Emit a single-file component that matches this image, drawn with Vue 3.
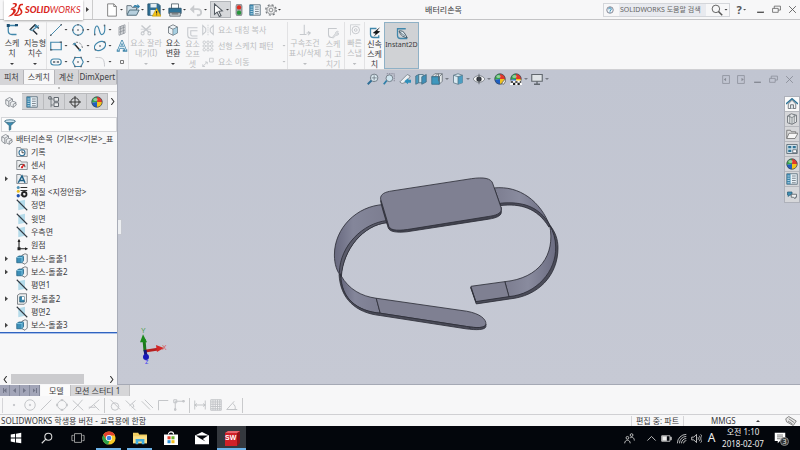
<script setup>
import { h } from 'vue'

const B = '#4187ab'
const D = '#5b636c'
const G = '#c6c9cd'
const ball = '<path d="M8 8V1A7 7 0 0 0 1 9z" fill="#35a84a"/><path d="M8 8V1a7 7 0 0 1 7 7z" fill="#e03a2c"/><path d="M8 8h7a7 7 0 0 1-7 7z" fill="#f2c21d"/><path d="M8 8v7a7 7 0 0 1-7-6z" fill="#1f5fc0"/><circle cx="8" cy="8" r="7" fill="none" stroke="#3c4a55"/><ellipse cx="6" cy="4.500" rx="3" ry="2" fill="#fff" opacity=".45"/>'
const part = '<path d="M1 5l5-3 4 2v3l4 1 1 4-4 3-4-2-2 1-4-3z" fill="#eef0f2" stroke="#777c83"/><path d="M1 5l4 2v7M5 7l5-3M7 12V9l3-2M11 15v-4l4-2" fill="none" stroke="#777c83"/>'
const folder = '<path d="M1 14V2h5l1 2h8v10z" fill="#eceef0" stroke="#70757c"/>'
const boss = '<path d="M8 3l4-2 3 1v10l-3 3-4-2z" fill="#f2f3f4" stroke="#555b62"/><path d="M1 6l3-2h6v6l-2 3H1z" fill="#3d8fb8" stroke="#1f5f80"/><path d="M1 6h7l2-2M8 6v7" fill="none" stroke="#8fd0ea"/>'
const plane = '<path d="M3 3l9-2v12l-9 2z" fill="#b5dbea"/><path d="M1 1l14 14" stroke="#333a42" stroke-width="1.500"/>'
const panel = '<path d="M1 1h14v14H1z" fill="#e9f1f6" stroke="#4a5f6e"/><path d="M1 1h5v14H1z" fill="#3d86ac"/><path d="M2 4h3M2 7h3M2 10h3M2 13h3" stroke="#d3e9f4"/><path d="M8 4h5M8 7h5M8 10h5M8 13h5" stroke="#5b6670"/>'

const icons = {
  ds: '<path d="M5 1.500C8 .5 10 1 9.500 3.500 9 5.500 6.500 6.500 4 7c4-.5 5.500 1.500 3.500 4.500C6 14 3 15.500 0 15.500c3-2 5-3.500 5.500-5.500.5-1.500-1-2-3-1.800l1.500-2.200c2-.5 3.300-1.300 3.500-2.300C7.700 2.500 6.800 2 5 2.500z" fill="#d9261c"/><path d="M17 3c-3-1-5 0-5 2.500 0 2 3 3 2.500 5.500-.5 2.500-4 3.500-7.500 3" fill="none" stroke="#d9261c" stroke-width="1.700"/><path d="M11 6c1 3-1 6-4 8" fill="none" stroke="#d9261c" stroke-width="1.300"/>',
  newdoc: '<path d="M3 1h7l3 3v11H3z" fill="#fff" stroke="#777"/><path d="M10 1v3h3" fill="none" stroke="#777"/>',
  open: '<path d="M1 13V3h5l1 2h5v3" fill="#cfdfe8" stroke="#5b6a75"/><path d="M1 14l3-6h11l-3 6z" fill="#b7d0de" stroke="#44606f"/><path d="M8 5c1-3 3-3 5-2V1l3 3-3 3V5c-2-1-3-1-5 0" fill="#2f7fa8"/>',
  save: '<path d="M1 1h12l2 2v11H1z" fill="#2f6f96" stroke="#24516c"/><path d="M4 1h7v4H4zM4 8h8v6H4z" fill="#e6eef3"/><path d="M11 6l5 9H6z" fill="#f6c518" stroke="#b38b00" stroke-width=".6"/><path d="M11 9v3M11 13v1" stroke="#222" stroke-width="1.200"/>',
  print: '<path d="M4 1h8v6H4z" fill="#fff" stroke="#56656f"/><path d="M1 6h14v6H1z" fill="#2f7398" stroke="#27516a"/><path d="M2 11h12v4H2z" fill="#d6dde1" stroke="#56656f"/><path d="M4 12.500h8" stroke="#333"/>',
  undo: '<path d="M2 7h8c5 0 5 7 1 7H9" fill="none" stroke="#c9cbce" stroke-width="2.200"/><path d="M6 2L1 7l5 5z" fill="#c9cbce"/>',
  cursor: '<path d="M4 1l9 8-4 .5 2.500 5-2 1L7 10.500 4 13z" fill="#fff" stroke="#555c63" stroke-width="1.200"/>',
  light: '<rect x="4" y="0" width="8" height="16" rx="3" fill="#a3a7aa" stroke="#787d81"/><circle cx="8" cy="4.500" r="2.900" fill="#e32a1d"/><circle cx="8" cy="11.500" r="2.900" fill="#27963c"/>',
  options: panel,
  gear: '<circle cx="8" cy="8" r="5.500" fill="#f0f0f0" stroke="#707478"/><circle cx="8" cy="8" r="2.500" fill="none" stroke="#707478"/><circle cx="8" cy="8" r="7" fill="none" stroke="#707478" stroke-width="1.600" stroke-dasharray="2.750 2.750"/>',
  help: '<circle cx="8" cy="8" r="6.500" fill="#eef5f9" stroke="#667" stroke-width="1.500"/><path d="M5.500 6.500c0-4 5-3.500 5 0 0 2-2.500 1.500-2.500 3.500M8 11v2" fill="none" stroke="#1f7fae" stroke-width="2"/>',
  search: '<circle cx="6.500" cy="6.500" r="5" fill="none" stroke="#555" stroke-width="1.200"/><path d="M10 10l5 5" stroke="#555" stroke-width="2"/>',
  min: '<path d="M2 13h12" stroke="currentColor" stroke-width="2.500"/>',
  restore: '<path d="M1 6h10v7H1zM4 6V2h11v7h-4" fill="none" stroke="currentColor" stroke-width="1.300"/>',
  close: '<path d="M2 2l12 12M14 2L2 14" stroke="currentColor" stroke-width="1.500"/>',
  dockl: '<path d="M3 1h12v14H3z" fill="none" stroke="currentColor" stroke-width="1.300"/><path d="M9 5v6L5 8z" fill="currentColor"/>',
  dockr: '<path d="M1 1h12v14H1z" fill="none" stroke="currentColor" stroke-width="1.300"/><path d="M8 5v6l4-3z" fill="currentColor"/>',
  sketch: `<path d="M14 2H3v7c0 4 2 5 5 5h6" fill="none" stroke="${B}" stroke-width="1.700"/><path d="M1 0h4v4H1zM12 0h4v3h-4z" fill="#1d4f72"/>`,
  dim: `<path d="M1 8l7-7 5 5M5 8l6 6" fill="none" stroke="#222d36" stroke-width="1.800"/><path d="M1 8l3-1 1 3zM9 0l3 5-5-1z" fill="${B}"/><path d="M5 8l8-6" stroke="${B}" stroke-width="1.500"/>`,
  line: `<path d="M1 15L15 1" stroke="${B}" stroke-width="1.300"/><path d="M0 14h2v2H0zM14 0h2v2h-2z" fill="${D}"/>`,
  circle: `<circle cx="8" cy="8" r="7" fill="none" stroke="${B}" stroke-width="1.500"/><path d="M7 7h2v2H7zM7 0h2v2H7zM7 14h2v2H7zM0 7h2v2H0zM14 7h2v2h-2z" fill="${D}"/>`,
  spline: `<path d="M1 15C0 3 4 0 6 5s2 10 5 9 4-6 3-13" fill="none" stroke="${B}" stroke-width="1.500"/><path d="M0 13h2v2H0zM13 1h2v2h-2z" fill="${D}"/>`,
  shade: '<path d="M4 4l8-3v11l-8 3zM6 3v11M8 2v11M10 2v11M4 7l8-3M4 11l8-3" fill="none" stroke="#8a8f95"/>',
  rect: `<path d="M1 3h14v10H1z" fill="none" stroke="${B}" stroke-width="1.600"/><path d="M0 12h3v2H0zM13 2h3v2h-3z" fill="${D}"/>`,
  arc: `<path d="M1 6c3-5 12-4 13 5" fill="none" stroke="#6b7278" stroke-width="1.200" stroke-dasharray="3 2"/><path d="M3 5l7 8" stroke="#222" stroke-width="1.800"/><path d="M2 4h3v3H2zM9 12h3v3H9z" fill="${B}"/>`,
  ellipse: `<ellipse cx="8" cy="8" rx="8" ry="5.500" transform="rotate(-30 8 8)" fill="none" stroke="${B}" stroke-width="1.600"/><path d="M7 7h2v2H7zM1 12h2v2H1zM13 2h2v2h-2z" fill="${D}"/>`,
  letterA: `<path d="M1 14h4M9 14h6M3 14L8 2l5 12M5 10h6" fill="none" stroke="${B}" stroke-width="3"/><path d="M3 14L8 2l5 12M5 10h6" fill="none" stroke="#e9f3f8" stroke-width="1.200"/>`,
  slot: `<rect x="1" y="4" width="14" height="8" rx="4" fill="none" stroke="${B}" stroke-width="1.500"/><path d="M4 7h3v2H4zM9 7h3v2H9z" fill="${D}"/>`,
  polygon: `<path d="M4 2h8l3 6-3 6H4L1 8z" fill="none" stroke="${B}" stroke-width="1.500"/><path d="M7 7h2v2H7zM3 1h2v2H3zM11 1h2v2h-2zM3 13h2v2H3zM11 13h2v2h-2z" fill="${D}"/>`,
  fillet: `<path d="M2 2h4c6 0 8 3 8 12" fill="none" stroke="${G}" stroke-width="1.300"/>`,
  point: '<path d="M6 6h4v4H6z" fill="none" stroke="#777" stroke-width="1.300"/>',
  trim: `<path d="M2 2l10 9M14 2L4 11" stroke="${G}" stroke-width="2"/><circle cx="3.500" cy="12.500" r="2" fill="none" stroke="${G}" stroke-width="1.400"/><circle cx="12.500" cy="12.500" r="2" fill="none" stroke="${G}" stroke-width="1.400"/><path d="M1 7h14" stroke="${G}"/>`,
  convert: '<path d="M2 4l6-3 6 3v8l-6 3-6-3z" fill="#eef3f6" stroke="#5e666e"/><path d="M2 4l6 3 6-3M8 7v8" fill="none" stroke="#5e666e"/><path d="M8 7l6-3v8l-6 3z" fill="#7ab8d4" opacity=".6"/>',
  offset: `<path d="M14 1H1v10c0 3 1 4 4 4h9M14 5H5v5c0 1 1 2 2 2h7" fill="none" stroke="${G}" stroke-width="1.400"/>`,
  mirror: `<path d="M8 1v14" stroke="${G}" stroke-dasharray="2 1"/><path d="M1 2v12l4-4V6zM15 2v12l-4-4V6z" fill="none" stroke="${G}" stroke-width="1.400"/>`,
  pattern: `<g fill="none" stroke="${G}" stroke-width="1.200"><circle cx="3" cy="3" r="1.700"/><circle cx="8" cy="3" r="1.700"/><circle cx="13" cy="3" r="1.700"/><circle cx="3" cy="8" r="1.700"/><circle cx="8" cy="8" r="1.700"/><circle cx="13" cy="8" r="1.700"/><circle cx="3" cy="13" r="1.700"/><circle cx="8" cy="13" r="1.700"/><circle cx="13" cy="13" r="1.700"/></g>`,
  move: `<path d="M10 3h5v5h-5z" fill="none" stroke="${G}" stroke-width="1.200"/><path d="M1 14l6-6M4 8h3v3M1 11v3h3" fill="none" stroke="${G}" stroke-width="1.200"/>`,
  relation: `<path d="M7 1v13M1 14h9" stroke="${G}" stroke-width="1.400"/><path d="M10 12h5M12 10l3 2-3 3" fill="none" stroke="${G}" stroke-width="1.400"/>`,
  repair: `<path d="M13 2H2v8c0 3 1 4 4 4h2" fill="none" stroke="${G}" stroke-width="1.400"/><path d="M7 14l4-5c0-3 3-4 4-3l-2 2 1 1 2-1c0 3-2 3-4 3l-4 4z" fill="#e3e4e6" stroke="${G}"/>`,
  snap: `<path d="M2 1v14M2 1h13" fill="none" stroke="${G}"/><circle cx="9" cy="8" r="5" fill="none" stroke="${G}" stroke-width="1.300"/><circle cx="9" cy="8" r="1.800" fill="none" stroke="${G}" stroke-width="1.300"/>`,
  rapid: `<path d="M10 2H2v8c0 3 1 4 4 4h7v-3" fill="none" stroke="${B}" stroke-width="1.700"/><path d="M15 0L5 8l4 1-3 4 9-7-4-1z" fill="#15181b"/>`,
  instant: `<path d="M13 1H2v9c0 3 1 4 4 4h9" fill="none" stroke="${B}" stroke-width="1.700"/><path d="M4 4c3-1 7 1 8 4l3 5-4-1c-3-1-5-3-7-8z" fill="#e4eef4" stroke="#3b505d" stroke-width="1.200"/><path d="M5 5l7 6" stroke="#3b505d"/>`,
  zoomfit: '<circle cx="9.500" cy="6.500" r="5" fill="#dcebf2" stroke="#6a747e" stroke-width="1.200"/><path d="M6 10l-5 5" stroke="#2f6f96" stroke-width="2.500"/><path d="M9.500 3v7M6 6.500h7" stroke="#6a747e"/>',
  zoomarea: '<path d="M5 1h10v10" fill="none" stroke="#778" stroke-dasharray="2 1"/><circle cx="8.500" cy="7" r="4.500" fill="#cfe4ee" stroke="#6e7882" stroke-width="1.200"/><path d="M5 10l-4 5" stroke="#2f7fa8" stroke-width="2.400"/>',
  prev: '<path d="M1 12L11 2l4 2-5 8-6 2z" fill="#eceff1" stroke="#6e7882"/><path d="M7 11l5-4v2h4v4h-4v2z" fill="#2f8fba"/>',
  section: '<path d="M1 4l4-2v11l-4 2z" fill="#4c9cc0" stroke="#44697d"/><path d="M5 2h6v11H5z" fill="#cfe3ec" stroke="#44697d"/><path d="M9 5l6-3v10l-6 3z" fill="#3f8fb8" stroke="#44697d"/>',
  orient: '<path d="M5 1h10v10l-4 4V5H1z" fill="#e4e8ea" stroke="#5e666e"/><path d="M1 5h10v10H1z" fill="#3f97bd" stroke="#2b6583"/><path d="M15 1l-4 4M10 1v10M5 5l4-4" stroke="#5e666e"/>',
  display: '<path d="M2 3l6-2 6 2v10l-6 2-6-2z" fill="#d9e9f1" stroke="#55707f"/><path d="M8 5l6-2v10l-6 2z" fill="#4b9dc2"/><path d="M2 3l6 2 6-2M8 5v10" fill="none" stroke="#55707f"/>',
  eye: '<path d="M0 8c4-6 12-6 16 0-4 6-12 6-16 0z" fill="#f1f2f3" stroke="#6a7077"/><circle cx="8" cy="8" r="3.500" fill="#2f343a"/><path d="M8 1v14" stroke="#50565d"/>',
  ball,
  appear: ball + '<path d="M10 14l4-5 2 1-3 5z" fill="#f1f1f1" stroke="#555"/>',
  scene: ball + '<path d="M1 10h14l1 6H0z" fill="#fff"/><path d="M1 11h3v2H1zM7 11h3v2H7zM13 11h2v2h-2zM4 13h3v3H4zM10 13h3v3h-3z" fill="#222"/>',
  monitor: '<path d="M1 2h14v9H1z" fill="#dfe3e6" stroke="#61676e" stroke-width="1.500"/><path d="M8 11v3M4 15h8" stroke="#61676e" stroke-width="1.800"/>',
  home: '<path d="M3 8v6h10V8L8 3z" fill="#f3f4f5" stroke="#565d64"/><path d="M0 8l8-7 8 7" fill="none" stroke="#2f7396" stroke-width="2"/><path d="M6 14V9h4v5" fill="#dce4e8" stroke="#565d64"/>',
  library: '<path d="M2 4l5-3 7 2v9l-6 3-6-2z" fill="#e3e5e6" stroke="#6f757b" stroke-width="1.200"/><path d="M2 4l6 2v9M8 6l6-3M5 2v12M11 2v11" fill="none" stroke="#6f757b"/>',
  folderopen: '<path d="M1 14V3h5l1 2h6v3" fill="#ddd" stroke="#666"/><path d="M1 14l3-7h12l-4 7z" fill="#f6f6f6" stroke="#666"/>',
  palette: '<path d="M1 2h14v12H1z" fill="#cfe0e9" stroke="#4e5b64"/><path d="M3 4h4v3H3zM9 4h4v3H9zM3 9h4v3H3z" fill="#2f7396"/><path d="M9 9h5v4H9z" fill="#fff" stroke="#4e5b64"/>',
  panel,
  forum: '<path d="M2 4h6v4H5l-2 2V8H2z" fill="#3f8fb4" stroke="#2b5f7a"/><path d="M7 7h7v4h-2v2l-2-2H7z" fill="#eef0f1" stroke="#4e565e"/>',
  part,
  config: '<path d="M4 1v14M4 4h3M4 12h3" stroke="#5f656b" fill="none"/><path d="M1 1h3v3H1zM8 2h6v5H8zM8 9h6v5H8z" fill="#e8eaeb" stroke="#5f656b" stroke-width="1.300"/>',
  target: '<circle cx="8" cy="8" r="5.500" fill="none" stroke="#333" stroke-width="1.300"/><path d="M8 0v16M0 8h16" stroke="#333" stroke-width="1.300"/>',
  funnel: '<path d="M1 3l6 6v6l2-1V9l6-6z" fill="#3c8fb6" stroke="#2c6079"/><ellipse cx="8" cy="3" rx="7" ry="2" fill="#cfe6f1" stroke="#2c6079"/>',
  history: folder + '<circle cx="8" cy="9" r="4" fill="#fff" stroke="#2f6f96" stroke-width="1.400"/><path d="M8 6v3h3" fill="none" stroke="#222"/>',
  sensor: folder + '<path d="M4 11a4 4 0 0 1 8 0" fill="#fff" stroke="#555" stroke-width="1.400"/><path d="M8 11l3-4" stroke="#d22" stroke-width="1.800"/><circle cx="8" cy="11" r="1.500" fill="#d22"/>',
  note: folder + '<path d="M3 13L8 4l4 9M5 10h6" fill="none" stroke="#1e6187" stroke-width="2"/>',
  material: '<path d="M6 2h9M6 6h9M6 12h4" stroke="#333" stroke-width="1.500"/><circle cx="3" cy="2" r="2" fill="#4f92b5"/><circle cx="3" cy="7" r="2" fill="#e5b91e"/><circle cx="3" cy="13" r="2.200" fill="#1f4fae"/><circle cx="11" cy="11" r="3" fill="none" stroke="#222" stroke-width="2.400"/>',
  plane,
  origin: '<path d="M4 1v12h11" fill="none" stroke="#222" stroke-width="1.500"/><path d="M2 4l2-4 2 4zM12 11l4 2-4 2zM2 11h4v4H2z" fill="#222"/>',
  boss,
  cut: '<path d="M2 3l3-2h9v11l-3 3H2z" fill="#eceeef" stroke="#5b6167"/><path d="M5 5h6v7H5z" fill="#3a8db5" stroke="#20546e"/><path d="M8 5h3v4H8z" fill="#fff"/>',
  'b-point': '<circle cx="8" cy="8" r="1" fill="#bbb"/>',
  'b-circle': '<circle cx="8" cy="8" r="7"/><circle cx="8" cy="8" r="1"/>',
  'b-line': '<path d="M1 15L15 1"/>',
  'b-quad': '<circle cx="8" cy="8" r="6"/><path d="M7 0h2v2H7zM7 14h2v2H7zM0 7h2v2H0zM14 7h2v2h-2z"/>',
  'b-cross': '<path d="M1 2l14 13M14 1L8 8 1 15"/>',
  'b-near': '<path d="M15 1L1 13M1 11h9M8 8l7 7"/>',
  'b-tan': '<circle cx="8" cy="10" r="5"/><path d="M2 1l13 13"/>',
  'b-perp': '<path d="M1 2l13 13M14 2L6 9M10 6l2 4-3 2"/>',
  'b-par': '<path d="M1 3l11 11M5 1l11 11"/>',
  'b-hv': '<path d="M2 15V2h13"/>',
  'b-hvp': '<path d="M3 15V3h12M1 1h4v4H1zM13 2h2v2h-2zM2 13h2v2H2z"/>',
  'b-len': '<path d="M1 2v12M15 2v12M1 8h14M4 6L1 8l3 2M12 6l3 2-3 2"/>',
  'b-grid': '<path d="M1 1h14v14H1zM4 1v14M7 1v14M10 1v14M13 1v14M1 4h14M1 7h14M1 10h14M1 13h14"/>',
  'b-angle': '<path d="M15 14H1L11 3M9 6c3 2 4 5 3 8"/>',
  tag: '<path d="M1 5l4-3 10 6-4 6-9-5z" fill="#e8e8e8" stroke="#666"/><path d="M5 5l7 5M4 8l6 4" stroke="#666"/>',
  win: '<path d="M2 4l5-1v4.500H2zM8 3l6-1v5.500H8zM2 8.500h5V13l-5-1zM8 8.500h6V14l-6-1z" fill="#fff"/>',
  wsearch: '<circle cx="9.500" cy="6.500" r="4" fill="none" stroke="#ddd" stroke-width="1.200"/><path d="M7 9l-5 5" stroke="#ddd" stroke-width="1.300"/>',
  tasks: '<path d="M4 3h8v10H4zM1 5v6M15 5v6M1 5h2M1 11h2M15 5h-2M15 11h-2" fill="none" stroke="#aaa"/>',
  chrome: '<circle cx="8" cy="8" r="7.500" fill="#f6c925"/><path d="M1.500 4.300A7.500 7.500 0 0 1 14.900 5H8L5 9.500z" fill="#e2412f"/><path d="M1.500 4.300L5 10.200l3.500 1L7 15.500A7.500 7.500 0 0 1 1.500 4.300z" fill="#2ba24c"/><circle cx="8" cy="8" r="3.500" fill="#fff"/><circle cx="8" cy="8" r="2.700" fill="#3f7fe0"/>',
  explorer: '<path d="M0 2h6l1 2h9v10H0z" fill="#f3cf62"/><path d="M0 6h16v8H0z" fill="#fbe08a"/><path d="M3 15V9h10v6h-3v-3H6v3z" fill="#43aee0"/>',
  store: '<path d="M5 4c0-4 6-4 6 0" fill="none" stroke="#fff" stroke-width="1.200"/><path d="M0 4h16v12H0z" fill="#fff"/><path d="M4 6h3.500v3.500H4z" fill="#e2412f"/><path d="M8.500 6H12v3.500H8.500z" fill="#69b12d"/><path d="M4 10.500h3.500V14H4z" fill="#2c8fd8"/><path d="M8.500 10.500H12V14H8.500z" fill="#f5bd1c"/>',
  mail: '<path d="M0 5l8-4 8 4v10H0z" fill="#fff"/><path d="M1 5h14L9 9l3 3-7-4z" fill="#05070c"/>',
  sw: '<path d="M1 3l3-2h12v12l-3 3H1z" fill="#8d1218"/><path d="M1 3h12v13H1z" fill="#cf2028"/><path d="M1 3l3-2h12l-3 2z" fill="#e8636a"/>',
  people: '<circle cx="5" cy="7" r="2"/><path d="M1 15c0-6 8-6 8 0"/><circle cx="11" cy="3" r="2"/><path d="M9 7c3-2 6 0 6 4"/>',
  up: '<path d="M2 11l6-6 6 6"/>',
  battery: '<path d="M1 4h12v8H1zM14 6h1v4h-1z"/><path d="M2 5h6v6H2z" fill="#eee"/>',
  wifi: '<path d="M2 15A13 13 0 0 1 15 2M5 15A10 10 0 0 1 15 5M8 15a7 7 0 0 1 7-7M11 15a4 4 0 0 1 4-4"/>',
  volume: '<path d="M1 6h3l4-4v12l-4-4H1zM10 6c1 1 1 3 0 4M12 4c2 2 2 6 0 8M14 2c3 3 3 9 0 12"/>',
  notice: '<path d="M1 1h14v11H8l-3 3v-3H1z" fill="#fff"/><path d="M4 4h8M4 6.500h8M4 9h5" stroke="#555"/>',
}

const Icon = (p) => h('svg', { class: 'ico', viewBox: '0 0 16 16', 'aria-hidden': 'true', innerHTML: icons[p.name] })
Icon.props = ['name']

const quick = ['newdoc', 'open', 'save', 'print', 'undo']
const tools = [
  ['line', 1], ['circle', 1], ['spline', 1], ['shade', 0],
  ['rect', 1], ['arc', 1], ['ellipse', 1], ['letterA', 0],
  ['slot', 1], ['polygon', 1], ['fillet', 1], ['point', 0],
]
const wide = [
  ['mirror', '요소 대칭 복사', 0],
  ['pattern', '선형 스케치 패턴', 1],
  ['move', '요소 이동', 1],
]
const tabs = ['피처', '스케치', '계산', 'DimXpert']
const managers = ['panel', 'config', 'target', 'ball']
const tree = [
  ['history', '기록', 0], ['sensor', '센서', 0], ['note', '주석', 1], ['material', '재질 <지정안함>', 0],
  ['plane', '정면', 0], ['plane', '윗면', 0], ['plane', '우측면', 0], ['origin', '원점', 0],
  ['boss', '보스-돌출1', 1], ['boss', '보스-돌출2', 1], ['plane', '평면1', 0], ['cut', '컷-돌출2', 1],
  ['plane', '평면2', 0], ['boss', '보스-돌출3', 1],
]
const views = [
  ['zoomfit', 0], ['zoomarea', 0], ['prev', 0], ['section', 0], ['orient', 1],
  ['display', 1], ['eye', 1], ['appear', 0], ['scene', 1], ['monitor', 1],
]
const docs = ['dockl', 'dockr', 'min', 'restore', 'close']
const side = ['home', 'library', 'folderopen', 'palette', 'ball', 'panel', 'forum']
const snaps = [
  ['b-point', 'b-circle', 'b-line', 'b-quad', 'b-cross', 'b-near'],
  ['b-tan', 'b-perp', 'b-par', 'b-hv', 'b-hvp'],
  ['b-len', 'b-grid', 'b-angle'],
]
const apps = [
  ['win', 0], ['wsearch', 0], ['tasks', 0], ['chrome', 1], ['explorer', 1], ['store', 0], ['mail', 0],
]
</script>

<template>
  <div class="app">
    <header class="title">
      <div class="brand">
        <Icon name="ds" class="ds" /><span><b>SOLID</b>WORKS</span>
      </div>
      <button class="more" aria-label="메뉴"><i class="tri"></i></button>
      <div class="quick">
        <button v-for="q in quick" :key="q" class="split" :aria-label="q"><Icon :name="q" /><i class="caret"></i></button>
        <button class="split picked" aria-label="cursor"><Icon name="cursor" /><i class="caret"></i></button>
        <button class="solo" aria-label="light"><Icon name="light" class="s12" /></button>
        <button class="solo" aria-label="options"><Icon name="options" class="s12" /></button>
        <button class="split" aria-label="gear"><Icon name="gear" class="s12" /><i class="caret"></i></button>
      </div>
      <h1>배터리손목</h1>
      <div class="find">
        <Icon name="help" class="s10" />
        <input type="text" aria-label="도움말 검색" placeholder="SOLIDWORKS 도움말 검색" />
        <button aria-label="검색"><Icon name="search" class="s12" /><i class="caret"></i></button>
      </div>
      <div class="window">
        <button class="q">?<i class="caret"></i></button>
        <button v-for="w in ['min', 'restore', 'close']" :key="w" :aria-label="w"><Icon :name="w" class="s8" /></button>
      </div>
    </header>

    <nav class="ribbon">
      <div class="group">
        <button class="tall w24"><Icon name="sketch" class="s12" /><span>스케<br />치</span><i class="caret"></i></button>
        <button class="tall w22"><Icon name="dim" class="s12" /><span>지능형<br />치수</span><i class="caret"></i></button>
      </div>
      <div class="group grid">
        <button v-for="[n, c] in tools" :key="n" class="tool" :aria-label="n"><Icon :name="n" class="s12" /><i v-if="c" class="caret"></i></button>
      </div>
      <div class="group">
        <button class="tall w34 off"><Icon name="trim" class="s12" /><span>요소 잘라<br />내기(I)</span><i class="caret"></i></button>
        <button class="tall w20"><Icon name="convert" class="s12" /><span>요소<br />변환</span><i class="caret"></i></button>
        <button class="tall low w18 off"><Icon name="offset" class="s12" /><span>요소<br />오프<br />셋</span></button>
        <div class="wides">
          <button v-for="[n, t, c] in wide" :key="n" class="wide off"><Icon :name="n" class="s12" /><span>{{ t }}</span><i v-if="c" class="caret"></i></button>
        </div>
      </div>
      <div class="group">
        <button class="tall w34 off"><Icon name="relation" class="s12" /><span>구속조건<br />표시/삭제</span><i class="caret"></i></button>
        <button class="tall low w22 off"><Icon name="repair" class="s12" /><span>스케<br />치 고<br />치기</span></button>
      </div>
      <div class="group">
        <button class="tall w18 off"><Icon name="snap" class="s12" /><span>빠른<br />스냅</span><i class="caret"></i></button>
      </div>
      <div class="group last">
        <button class="tall low w18"><Icon name="rapid" class="s12" /><span>신속<br />스케<br />치</span></button>
        <button class="tall low active"><Icon name="instant" class="s12" /><span>Instant2D</span></button>
      </div>
    </nav>

    <main class="work">
      <aside class="left">
        <div class="tabs">
          <button v-for="t in tabs" :key="t" :class="{ on: t === '스케치' }">{{ t }}</button>
        </div>
        <div class="grip"><i></i></div>
        <div class="managers">
          <button class="first" aria-label="part"><Icon name="part" class="s12" /></button>
          <button v-for="m in managers" :key="m" class="mgr" :aria-label="m"><Icon :name="m" class="s12" /></button>
          <button class="next" aria-label="다음"><svg class="chev" viewBox="0 0 4 8"><path d="M0 0l3 4-3 4" /></svg></button>
        </div>
        <label class="filter"><Icon name="funnel" class="s12" /><input type="text" aria-label="필터" /></label>
        <ul class="tree">
          <li class="root"><Icon name="part" class="s12" /><span>배터리손목&nbsp; (기본&lt;&lt;기본&gt;_표</span></li>
          <li v-for="([n, t, e], k) in tree" :key="k">
            <i :class="['fold', { tri: e }]"></i><Icon :name="n" class="s12" /><span>{{ t }}</span>
          </li>
        </ul>
        <div class="hscroll">
          <svg class="chev" viewBox="0 0 4 8"><path d="M4 0L1 4l3 4" /></svg>
          <i class="thumb"></i>
          <svg class="chev" viewBox="0 0 4 8"><path d="M0 0l3 4-3 4" /></svg>
        </div>
      </aside>

      <section class="view">
        <svg class="scene" viewBox="118 70 682 315" role="img" aria-label="배터리손목">
          <defs>
            <linearGradient id="gl" x1="0" y1="0" x2="1" y2="0"><stop offset="0" stop-color="#68697f" /><stop offset=".35" stop-color="#84869a" /><stop offset="1" stop-color="#7c7d90" /></linearGradient>
            <linearGradient id="gr" x1="0" y1="0" x2="1" y2="0"><stop offset="0" stop-color="#7c7d90" /><stop offset=".45" stop-color="#898b9e" /><stop offset="1" stop-color="#6b6c81" /></linearGradient>
          </defs>
          <g transform="translate(320 165) scale(.3333)" stroke="#2d2e37" stroke-width="2.500" stroke-linejoin="round">
            <path d="M190 120C110 124 42 190 42 272c0 28 8 50 20 64 6-80 66-156 140-162z" fill="url(#gl)" />
            <path d="M202 174C128 182 68 256 63 336l-6-12c2-80 70-148 144-156z" fill="#5a5b6a" />
            <path d="M62 334c24 42 62 62 106 68l12 45C112 442 62 404 62 334z" fill="url(#gl)" />
            <path d="M168 402l272 39c40 7 60 24 58 40-2 11-28 11-58 6L180 447z" fill="#7f8092" />
            <path d="M60 330c2 74 52 111 120 117l260 40c30 5 56 5 58-6v6c-2 11-30 11-60 7L180 454C106 446 60 404 56 330z" fill="#4b4c59" />
            <path d="M450 489v5" />
            <path d="M523 70c76-8 140 40 168 116-40-60-90-72-150-65z" fill="url(#gr)" />
            <path d="M541 116c66-6 116 8 150 66l-3 6c-36-58-86-72-147-65z" fill="#4b4c5a" />
            <path d="M690 182c18 90-32 160-135 170l13 47c82-8 148-72 143-151-1-26-9-48-21-66z" fill="url(#gr)" />
            <path d="M453 366l102-14 13 47-100 15z" fill="#7f8092" />
            <path d="M468 412l100-15c82-8 142-76 140-149 0-26-8-46-16-64 14 18 23 40 23 66 0 86-62 146-145 154l-101 15-17-50z" fill="#4b4c59" />
            <path d="M181 108c0 8 18 66 23 82 4 12 24 15 56 12l246-38c24-4 42-10 38-26v-10z" fill="#42434f" />
            <path d="M181 103c-1-15 14-21 34-24l240-37c35-5 60-2 64 16l25 72c4 18-19 23-39 26l-230 37c-35 6-63 7-69-7z" fill="#7f8092" />
          </g>
          <g class="triad" stroke-width="3">
            <path d="M144 352l-1-12" stroke="#1b7a1b" /><path d="M142 335l4 8h-7z" fill="#1b8a1b" />
            <path d="M144 352l13-2" stroke="#b51f1f" /><path d="M155 346l8 3-7 4z" fill="#d32626" />
            <path d="M144 351l1 6" stroke="#15157a" /><circle cx="145" cy="358" r="3" fill="#1717b8" />
            <text x="140" y="334" fill="#4c9e4c">Y</text><text x="161" y="351" fill="#d65a5a">X</text><text x="144" y="365" fill="#4a4af0">z</text>
          </g>
        </svg>
        <div class="overlay">
          <div class="viewbar">
            <button v-for="[n, c] in views" :key="n" :aria-label="n"><Icon :name="n" class="s12" /><i v-if="c" class="caret"></i></button>
          </div>
          <div class="docbar">
            <button v-for="d in docs" :key="d" :aria-label="d"><Icon :name="d" class="s8" /></button>
          </div>
        </div>
        <div class="side">
          <button v-for="(s, k) in side" :key="s" :class="{ on: k === 0 }" :aria-label="s"><Icon :name="s" class="s12" /></button>
        </div>
        <button class="handle" aria-label="패널 접기"></button>
      </section>
    </main>

    <div class="sheets">
      <button class="nav" aria-label="처음"><i class="bar"></i><i class="tri back"></i></button>
      <button class="nav" aria-label="이전"><i class="tri back"></i></button>
      <button class="nav" aria-label="다음"><i class="tri"></i></button>
      <button class="nav" aria-label="끝"><i class="tri"></i><i class="bar"></i></button>
      <button class="sheet on">모델</button>
      <button class="sheet">모션 스터디 1</button>
    </div>
    <div class="snaps">
      <div v-for="(g, k) in snaps" :key="k" class="snapset">
        <button v-for="s in g" :key="s" :aria-label="s"><Icon :name="s" class="s12" /></button>
      </div>
    </div>
    <footer class="status">
      <span class="msg">SOLIDWORKS 학생용 버전 - 교육용에 한함</span>
      <span class="cell">편집 중: 파트</span>
      <span class="cell units">MMGS<i class="caret upward"></i></span>
      <Icon name="tag" class="s12" />
    </footer>

    <div class="taskbar">
      <button v-for="[a, r] in apps" :key="a" :class="['task', { run: r }]" :aria-label="a"><Icon :name="a" /></button>
      <button class="task run front" aria-label="SOLIDWORKS"><Icon name="sw" class="s16" /><span class="sw">SW</span></button>
      <div class="tray">
        <Icon name="people" class="line people" />
        <Icon name="up" class="line" />
        <Icon name="battery" class="line" />
        <Icon name="wifi" class="line" />
        <Icon name="volume" class="line" />
        <span class="ime">A</span>
        <time>오전 1:10<br />2018-02-07</time>
        <button class="notice" aria-label="알림"><Icon name="notice" /><b>3</b></button>
      </div>
    </div>
  </div>
</template>

<style>
body { margin: 0; }
</style>

<style scoped>
.app { display: flex; flex-direction: column; min-height: 100vh; background: #f7f7f8; color: #3a3a3c; font: 8px/10px "Noto Sans", "Noto Sans CJK KR", sans-serif; overflow: hidden; }
.app * { box-sizing: border-box; }
button { display: flex; align-items: center; justify-content: center; padding: 0; border: 0; background: none; color: inherit; font: inherit; white-space: nowrap; flex: none; }
input { min-width: 0; padding: 0; border: 0; background: none; font: inherit; color: #555; outline: 0; }
.ico { width: 14px; height: 14px; flex: none; display: block; }
.s8 { width: 9px; height: 9px; }
.s10 { width: 8px; height: 8px; }
.s12 { width: 12px; height: 12px; }
.s16 { width: 16px; height: 16px; }
.caret { flex: none; width: 4px; height: 2px; margin: 0 1px; background: currentColor; clip-path: polygon(0 0, 100% 0, 50% 100%); }
.tri { flex: none; width: 3px; height: 5px; background: #444; clip-path: polygon(0 0, 100% 50%, 0 100%); }
.tri.back { clip-path: polygon(100% 0, 0 50%, 100% 100%); }
.chev { width: 4px; height: 7px; fill: none; stroke: #333; stroke-width: 1.2; }

.title { display: flex; align-items: center; height: 20px; border-bottom: 1px solid #c4c4c6; }
.brand { display: flex; align-items: center; gap: 2px; width: 79px; height: 20px; margin-left: 4px; padding-left: 4px; background: #fff; box-shadow: 0 1px 2px #aaa; color: #d9261c; font: italic 9px/12px Lato, sans-serif; }
.brand b { font-weight: 900; }
.ds { width: 15px; height: 15px; }
.more { width: 10px; height: 19px; border-right: 1px solid #ccc; }
.quick { display: flex; align-items: center; padding-left: 11px; }
.split { width: 21px; height: 17px; }
.solo { width: 16px; }
.picked { margin-left: 1px; background: #d6d8db; border: 1px solid #b2b5b9; }
h1 { flex: 1; margin: 0; text-align: center; font: inherit; }
.find { display: flex; align-items: center; width: 127px; height: 14px; border: 1px solid #d4d6da; padding-left: 2px; gap: 5px; }
.find input { width: 88px; height: 12px; background: #e8eaef; padding-left: 1px; font-size: 7px; }
.find input::placeholder { color: #666; opacity: 1; }
.window { display: flex; width: 70px; padding-left: 4px; color: #555; }
.window button { width: 16px; }
.window .q { font-size: 11px; font-weight: 700; margin-right: 2px; }

.ribbon { display: flex; height: 50px; padding-top: 2px; border-bottom: 1px solid #d0d0d3; }
.group { display: flex; border-right: 1px solid #e2e2e4; }
.group.last { border: 0; }
.grid { display: grid; grid-template-columns: 22px 22px 22px 15px; grid-auto-rows: 15px; row-gap: 1px; }
.tool { justify-content: flex-start; gap: 1px; padding-left: 3px; }
.tall { flex-direction: column; justify-content: flex-start; padding-top: 2px; }
.tall span { margin-top: 2px; text-align: center; }
.tall .caret { margin-top: auto; margin-bottom: 4px; }
.tall.low { padding-top: 5px; }
.tall.low span { margin-top: 0; }
.off { color: #bbbdc0; }
.w18 { width: 19px; }
.w20 { width: 20px; }
.w22 { width: 22px; }
.w24 { width: 24px; }
.w34 { width: 34px; }
.active { width: 35px; background: #d0d2d5; border: 1px solid #8fb1c6; font-size: 7px; }
.wides { display: grid; grid-auto-rows: 15px; row-gap: 1px; width: 85px; }
.wide { justify-content: flex-start; gap: 4px; }
.wide .caret { margin-left: auto; }

.work { display: flex; flex: 1; min-height: 315px; }
.left { display: flex; flex-direction: column; width: 118px; flex: none; border-right: 1px solid #a9adb8; }
.tabs { display: flex; height: 15px; border-bottom: 1px solid #d5d5d8; }
.tabs button { padding: 0 4px; height: 14px; background: #d5d5d8; border-right: 1px solid #b5b5b9; }
.tabs .on { background: #f7f7f8; }
.tabs button:last-child { flex: 1; padding: 0; }
.grip { display: flex; justify-content: center; align-items: center; height: 7px; border-bottom: 1px solid #ddd; }
.grip i { width: 2px; height: 2px; background: #aaa; border-radius: 1px; }
.managers { display: flex; height: 17px; margin-top: 1px; }
.managers .first { width: 22px; }
.managers .mgr { flex: 1; background: #d3d4d7; border: 1px solid #b9babd; border-left-width: 0; }
.managers .next { width: 9px; }
.filter { display: flex; align-items: center; height: 15px; margin: 7px 0 0 1px; padding-left: 2px; border: 1px solid #d5d6d9; background: #fcfcfc; }
.filter input { flex: 1; }
.tree { display: grid; grid-template-rows: repeat(15, 1fr); height: 201px; margin: 0; padding: 0; list-style: none; border-bottom: 1px solid #2f63c0; box-shadow: 0 1px 0 #a8bfe8; }
.tree li { display: flex; align-items: center; gap: 3px; padding-left: 5px; white-space: nowrap; overflow: hidden; min-height: 0; }
.tree .root { padding-left: 1px; }
.fold { width: 8px; height: 5px; }
.fold.tri { width: 3px; margin-right: 5px; }
.hscroll { display: flex; align-items: center; height: 10px; margin: auto 0 1px; padding: 0 3px; gap: 4px; }
.hscroll .thumb { width: 73px; height: 10px; margin-right: auto; background: #cbcbce; }

.view { position: relative; flex: 1; display: flex; justify-content: flex-end; background: linear-gradient(#c1c5d1, #c6c9d4); border-bottom: 1px solid #a5a9b5; }
.scene { position: absolute; left: 0; top: 0; width: 100%; height: 100%; }
.triad text { font: 7px "Liberation Sans", sans-serif; }
.overlay { position: absolute; left: 0; right: 0; top: 2px; display: flex; height: 14px; align-items: center; }
.viewbar { display: flex; flex: 1; padding-left: 247px; color: #777b84; }
.viewbar button { height: 14px; padding: 0 2px; }
.viewbar .caret { margin: 0 -1px 0 2px; }
.docbar { display: flex; color: #878b95; padding-right: 3px; }
.docbar button { width: 16px; }
.side { position: relative; align-self: flex-start; display: flex; flex-direction: column; width: 16px; margin-top: 26px; border: 1px solid #aeb1ba; }
.side button { height: 15px; background: #d6d7da; border-bottom: 1px solid #b6b8bd; }
.side button:last-child { border: 0; }
.side .on { background: #fafafa; }
.handle { position: absolute; left: 0; top: 149px; width: 4px; height: 16px; background: #eceef1; border: 1px solid #c4c7cf; border-left: 0; }

.sheets { display: flex; height: 11px; }
.nav { width: 10px; background: #a2a5b8; border-right: 1px solid #858a9c; }
.nav .tri { background: #727689; }
.nav .bar { width: 1px; height: 5px; background: #727689; }
.sheet { padding: 0 9px 0 4px; background: #d6d6d8; border-right: 1px solid #c0c0c2; }
.sheet.on { background: #fbfbfb; padding: 0 6px 0 8px; margin-left: 1px; }
.snaps { display: flex; align-items: center; height: 18px; padding-left: 2px; }
.snapset { display: flex; align-items: center; height: 15px; padding: 0 2px; border-right: 1px solid #c9cacc; }
.snapset:first-child { border-left: 1px solid #d5d5d8; padding-left: 3px; }
.snapset button { width: 16px; }
.snapset .ico { fill: none; stroke: #c2c4c7; stroke-width: 1.3; }
.status { display: flex; align-items: center; height: 12px; padding: 0 3px 0 1px; border-top: 1px solid #d0d0d3; }
.msg { flex: 1; }
.cell { border-left: 1px solid #d5d5d8; padding: 0 4px; }
.units { display: flex; align-items: center; justify-content: space-between; width: 102px; padding: 0 27px; }
.upward { transform: rotate(180deg); margin-right: -2px; }

.taskbar { display: flex; height: 24px; background: #03060c; color: #eee; }
.task { width: 31px; position: relative; border-bottom: 2px solid transparent; }
.task.run { border-bottom-color: #6cb2e8; width: 25px; margin: 0 3px; }
.task.front { width: 29px; margin: 0; background: #34383e; }
.task .ico { margin-top: 2px; }
.sw { position: absolute; left: 8px; top: 7px; font: 700 7px/10px "Liberation Sans", sans-serif; color: #fff; }
.tray { display: flex; align-items: center; margin-left: auto; gap: 4px; padding-right: 9px; }
.line { width: 11px; height: 11px; fill: none; stroke: #ccc; stroke-width: 1.3; }
.people { margin-right: 7px; }
.ime { font-size: 12px; width: 11px; text-align: center; }
time { width: 44px; text-align: center; line-height: 12px; }
.notice { position: relative; width: 22px; }
.notice .ico { width: 12px; height: 12px; }
.notice b { position: absolute; left: 11px; top: 5px; width: 9px; height: 9px; border-radius: 5px; background: #333; border: 1px solid #888; font: 7px/7px "Noto Sans", sans-serif; text-align: center; }
</style>
